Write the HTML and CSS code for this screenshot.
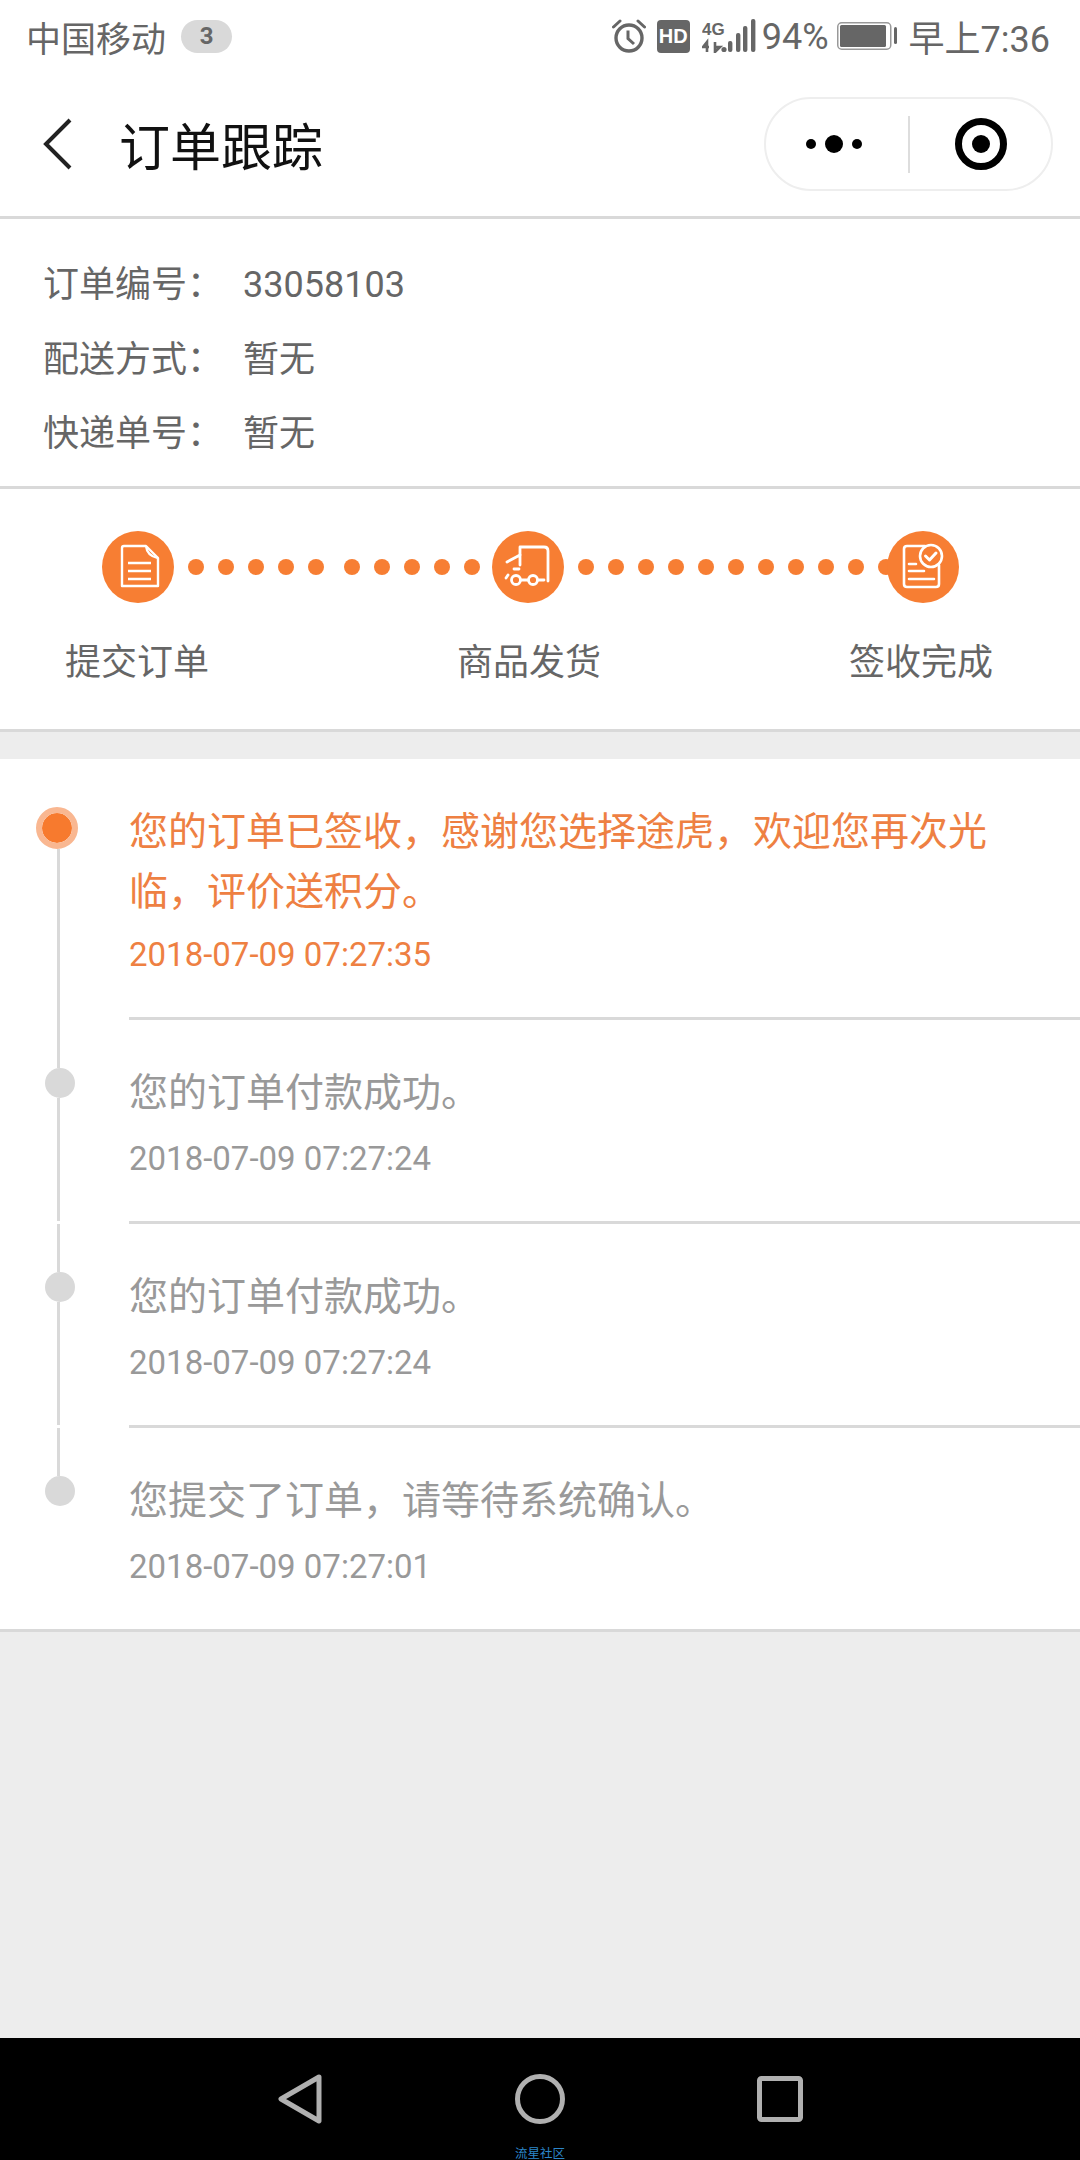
FILE: index.html
```html
<!DOCTYPE html>
<html lang="zh-CN">
<head>
  <meta charset="UTF-8">
  <title>订单跟踪</title>
  <link rel="stylesheet" href="styles.css">
</head>
<body>
<div class="phone">

  <!--状态栏-->
  <div class="status">
    <div class="status-left">
      <span class="carrier">中国移动</span>
      <span class="badge">3</span>
    </div>
    <div class="status-right">
      <svg class="ic-alarm" width="34" height="34" viewBox="0 0 34 34">
        <circle cx="17" cy="19" r="13" fill="none" stroke="#666" stroke-width="3.4"/>
        <path d="M16 11.5V19.5L22 25" fill="none" stroke="#666" stroke-width="3"/>
        <path d="M1.500 8L8 2M32.500 8L26 2" fill="none" stroke="#666" stroke-width="3" stroke-linecap="round"/>
      </svg>
      <span class="hd">HD</span>
      <svg class="ic-signal" width="54" height="34" viewBox="0 0 54 34">
        <text x="0" y="16" class="sig-text">4G</text>
        <path d="M5 33V23L1 28H7M13 23V33L18 28H12" fill="none" stroke="#666" stroke-width="2.6"/>
        <circle cx="22" cy="30.5" r="2.6" fill="#666"/>
        <rect x="26" y="22" width="4.4" height="11" rx="2" fill="#666"/>
        <rect x="34" y="14" width="4.4" height="19" rx="2" fill="#666"/>
        <rect x="41" y="7" width="4.4" height="26" rx="2" fill="#666"/>
        <rect x="49" y="0" width="4.4" height="33" rx="2" fill="#666"/>
      </svg>
      <span class="pct">94%</span>
      <svg class="ic-battery" width="60" height="28" viewBox="0 0 60 28">
        <rect x="0.75" y="0.75" width="53" height="26.5" rx="4" fill="none" stroke="#999" stroke-width="1.5"/>
        <rect x="3" y="3" width="46" height="22" rx="1.5" fill="#666"/>
        <rect x="57" y="5" width="3" height="17" rx="1.5" fill="#666"/>
      </svg>
      <span class="clock">早上7:36</span>
    </div>
  </div>

  <!--标题栏-->
  <div class="header">
    <svg class="ic-back" width="30" height="52" viewBox="0 0 30 52">
      <path d="M27 2L3 26L27 50" fill="none" stroke="#222" stroke-width="4"/>
    </svg>
    <h1 class="title">订单跟踪</h1>
    <div class="capsule">
      <div class="capsule-more">
        <i class="dot-s"></i>
        <i class="dot-b"></i>
        <i class="dot-s"></i>
      </div>
      <div class="capsule-line"></div>
      <div class="capsule-close"><i></i></div>
    </div>
  </div>

  <!--订单信息-->
  <div class="info">
    <div class="info-row"><span class="info-label">订单编号：</span><span>33058103</span></div>
    <div class="info-row"><span class="info-label">配送方式：</span><span>暂无</span></div>
    <div class="info-row"><span class="info-label">快递单号：</span><span>暂无</span></div>
  </div>

  <!--进度-->
  <div class="steps">
    <div class="steps-track">
      <div class="step-icon">
        <svg width="72" height="72" viewBox="0 0 72 72">
          <g fill="none" stroke="#fff" stroke-width="2.4" stroke-linejoin="round">
            <path d="M22 15H44L56 27V55H20V17Q20 15 22 15Z"/>
            <path d="M44 15Q45 25 56 27" />
            <path d="M26 32H49M26 40H49M26 48H49" stroke-width="2.6"/>
          </g>
        </svg>
      </div>
      <div class="dots dots-first">
        <i></i><i></i><i></i><i></i><i></i>
        <i class="dots-split"></i><i></i><i></i><i></i><i></i>
      </div>
      <div class="step-icon">
        <svg width="72" height="72" viewBox="0 0 72 72">
          <g fill="none" stroke="#fff" stroke-width="2.8" stroke-linecap="round" stroke-linejoin="round">
            <path d="M28 24V16H52Q56 16 56 20V50"/>
            <path d="M15 31L28 24V34M22 38H27M14 47L16 44"/>
            <circle cx="24" cy="49" r="4.5"/>
            <circle cx="41" cy="49" r="4.5"/>
            <path d="M29 49H36M46 49H52"/>
          </g>
        </svg>
      </div>
      <div class="dots dots-last">
        <i></i><i></i><i></i><i></i><i></i><i></i><i></i><i></i><i></i><i></i><i></i>
      </div>
      <div class="step-icon">
        <svg width="72" height="72" viewBox="0 0 72 72">
          <g fill="none" stroke="#fff" stroke-width="2.6" stroke-linecap="round" stroke-linejoin="round">
            <path d="M38 15H20Q17 15 17 18V53Q17 56 20 56H49Q52 56 52 53V34"/>
            <path d="M22 33H29M22 40H37M22 48H47"/>
            <circle cx="44" cy="25" r="11"/>
            <path d="M38.500 25L42.500 29L49 22" stroke-width="3"/>
          </g>
        </svg>
      </div>
    </div>
    <div class="steps-labels">
      <span>提交订单</span>
      <span>商品发货</span>
      <span>签收完成</span>
    </div>
  </div>

  <div class="page-gap"></div>

  <!--物流记录-->
  <div class="track">
    <div class="track-item current">
      <div class="rail">
        <span class="rail-top"></span>
        <span class="rail-dot"></span>
        <span class="rail-fill"></span>
      </div>
      <div class="track-body">
        <p class="track-text">您的订单已签收，感谢您选择途虎，欢迎您再次光临，评价送积分。</p>
        <p class="track-time">2018-07-09 07:27:35</p>
      </div>
    </div>
    <div class="track-item">
      <div class="rail rail-gap">
        <span class="rail-top"></span>
        <span class="rail-dot"></span>
        <span class="rail-fill"></span>
      </div>
      <div class="track-body">
        <p class="track-text">您的订单付款成功。</p>
        <p class="track-time">2018-07-09 07:27:24</p>
      </div>
    </div>
    <div class="track-item">
      <div class="rail rail-gap">
        <span class="rail-top"></span>
        <span class="rail-dot"></span>
        <span class="rail-fill"></span>
      </div>
      <div class="track-body">
        <p class="track-text">您的订单付款成功。</p>
        <p class="track-time">2018-07-09 07:27:24</p>
      </div>
    </div>
    <div class="track-item last">
      <div class="rail">
        <span class="rail-top"></span>
        <span class="rail-dot"></span>
      </div>
      <div class="track-body">
        <p class="track-text">您提交了订单，请等待系统确认。</p>
        <p class="track-time">2018-07-09 07:27:01</p>
      </div>
    </div>
  </div>

  <div class="page-rest"></div>

  <!--底部导航-->
  <div class="nav">
    <div class="nav-icons">
      <svg width="44" height="50" viewBox="0 0 44 50">
        <path d="M41 3L3 25L41 47Z" fill="none" stroke="#b0b0b0" stroke-width="5" stroke-linejoin="round"/>
      </svg>
      <svg width="50" height="50" viewBox="0 0 50 50">
        <circle cx="25" cy="25" r="22.500" fill="none" stroke="#b0b0b0" stroke-width="5"/>
      </svg>
      <svg width="46" height="46" viewBox="0 0 46 46">
        <rect x="2.500" y="2.500" width="41" height="41" rx="2" fill="none" stroke="#b0b0b0" stroke-width="5"/>
      </svg>
    </div>
    <div class="watermark">流星社区</div>
  </div>

</div>
</body>
</html>
```

FILE: styles.css
```css
* {
  margin: 0;
  padding: 0;
  box-sizing: border-box;
}

body {
  font-family: Roboto, "Noto Sans CJK SC", sans-serif;
  background-color: #ededed;
}

.phone {
  width: 1080px;
  height: 2160px;
  overflow: hidden;
  display: flex;
  flex-direction: column;
}

/* 状态栏 */
.status {
  height: 72px;
  flex: none;
  background-color: #fff;
  color: #666;
  font-size: 36px;
  display: flex;
  justify-content: space-between;
  align-items: center;
  padding: 0 30px 0 26px;
}

.status-left,
.status-right {
  display: flex;
  align-items: center;
}

.carrier {
  font-size: 35px;
}

.badge {
  width: 51px;
  height: 33px;
  margin-left: 15px;
  border-radius: 17px;
  background-color: #d9d9d9;
  font-size: 24px;
  font-weight: 700;
  line-height: 33px;
  text-align: center;
}

.ic-alarm {
  display: block;
}

.hd {
  width: 33px;
  height: 33px;
  margin-left: 11px;
  border-radius: 4px;
  background-color: #666;
  color: #fff;
  font-family: "Liberation Sans", sans-serif;
  font-size: 20px;
  font-weight: 700;
  line-height: 33px;
  text-align: center;
}

.ic-signal {
  margin-left: 12px;
}

.sig-text {
  font-family: "Liberation Sans", sans-serif;
  font-size: 17px;
  font-weight: 700;
  fill: #666;
}

.pct {
  margin-left: 6px;
  padding-top: 2px;
}

.ic-battery {
  margin-left: 8px;
}

.clock {
  margin-left: 12px;
}

/* 标题栏 */
.header {
  height: 147px;
  flex: none;
  background-color: #fff;
  border-bottom: 3px solid #d9d9d9;
  display: flex;
  align-items: center;
  padding: 0 27px 0 43px;
}

.ic-back {
  flex: none;
}

.title {
  margin-left: 46px;
  flex: 1;
  font-size: 51px;
  font-weight: 400;
  color: #111;
}

.capsule {
  width: 289px;
  height: 94px;
  border: 2px solid #eee;
  border-radius: 47px;
  display: flex;
  align-items: center;
}

.capsule-more {
  flex: 1;
  display: flex;
  justify-content: center;
  align-items: center;
  gap: 9px;
  padding-right: 6px;
}

.dot-s {
  width: 10px;
  height: 10px;
  border-radius: 50%;
  background-color: #000;
}

.dot-b {
  width: 18px;
  height: 18px;
  border-radius: 50%;
  background-color: #000;
}

.capsule-line {
  width: 2px;
  height: 57px;
  background-color: #ddd;
}

.capsule-close {
  width: 141px;
  flex: none;
  display: flex;
  justify-content: center;
}

.capsule-close i {
  width: 52px;
  height: 52px;
  border: 7px solid #000;
  border-radius: 50%;
  display: flex;
  justify-content: center;
  align-items: center;
}

.capsule-close i::after {
  content: "";
  width: 18px;
  height: 18px;
  border-radius: 50%;
  background-color: #000;
}

/* 订单信息 */
.info {
  flex: none;
  background-color: #fff;
  border-bottom: 3px solid #d9d9d9;
  padding: 29px 0 14.500px 43px;
  color: #666;
  font-size: 36px;
}

.info-row {
  height: 74.500px;
  line-height: 74px;
  display: flex;
}

.info-label {
  width: 200px;
  flex: none;
}

/* 进度 */
.steps {
  flex: none;
  height: 243px;
  background-color: #fff;
  border-bottom: 3px solid #d9d9d9;
  padding-top: 42px;
}

.steps-track {
  display: flex;
  padding-left: 102px;
}

.step-icon {
  width: 72px;
  height: 72px;
  flex: none;
  position: relative;
  border-radius: 50%;
  background-color: #f77e33;
}

.step-icon svg {
  display: block;
}

.dots {
  display: flex;
  align-items: center;
  gap: 14px;
  margin-left: 14px;
}

.dots i {
  width: 16px;
  height: 16px;
  flex: none;
  border-radius: 50%;
  background-color: #f77e33;
}

.dots-first {
  margin-right: 12px;
}

.dots-first .dots-split {
  margin-left: 6px;
}

.dots-last {
  margin-right: -7px;
}

.steps-labels {
  display: flex;
  justify-content: space-between;
  padding: 0 87px 0 65px;
  margin-top: 30px;
  color: #666;
  font-size: 36px;
  line-height: 60px;
}

.page-gap {
  height: 27px;
  flex: none;
}

/* 物流记录 */
.track {
  flex: none;
  background-color: #fff;
  border-bottom: 3px solid #d9d9d9;
}

.track-item {
  display: flex;
}

.rail {
  width: 129px;
  flex: none;
  display: flex;
  flex-direction: column;
  padding-left: 45px;
}

.rail-gap {
  padding-bottom: 3px;
}

.rail-top {
  width: 3px;
  height: 48px;
  margin-left: 12px;
  background-color: #d9d9d9;
}

.rail-fill {
  width: 3px;
  flex: 1;
  margin-left: 12px;
  background-color: #d9d9d9;
}

.rail-dot {
  width: 30px;
  height: 30px;
  flex: none;
  border-radius: 50%;
  background-color: #d9d9d9;
}

.current .rail-top {
  background-color: transparent;
}

.current .rail-dot {
  width: 42px;
  height: 42px;
  margin-left: -9px;
  border: 6px solid #f9b791;
  background-color: #f77a2e;
  background-clip: padding-box;
}

.track-body {
  flex: 1;
  padding: 43px 60px 40px 0;
  border-bottom: 3px solid #d9d9d9;
}

.track-item.last .track-body {
  border-bottom: 0;
}

.track-text {
  color: #999;
  font-size: 39px;
  line-height: 60px;
}

.track-time {
  margin-top: 14px;
  color: #999;
  font-size: 33px;
  line-height: 44px;
}

.current .track-text,
.current .track-time {
  color: #ee8042;
}

.current .track-time {
  margin-top: 11px;
}

.page-rest {
  flex: 1;
}

/* 底部导航 */
.nav {
  height: 122px;
  flex: none;
  background-color: #000;
  display: flex;
  flex-direction: column;
  align-items: center;
  padding-top: 36px;
}

.nav-icons {
  width: 525px;
  height: 50px;
  margin-left: 1px;
  display: flex;
  justify-content: space-between;
  align-items: center;
}

.watermark {
  margin-top: 23px;
  color: #2c86c9;
  font-size: 12.500px;
  line-height: 14px;
}
```
